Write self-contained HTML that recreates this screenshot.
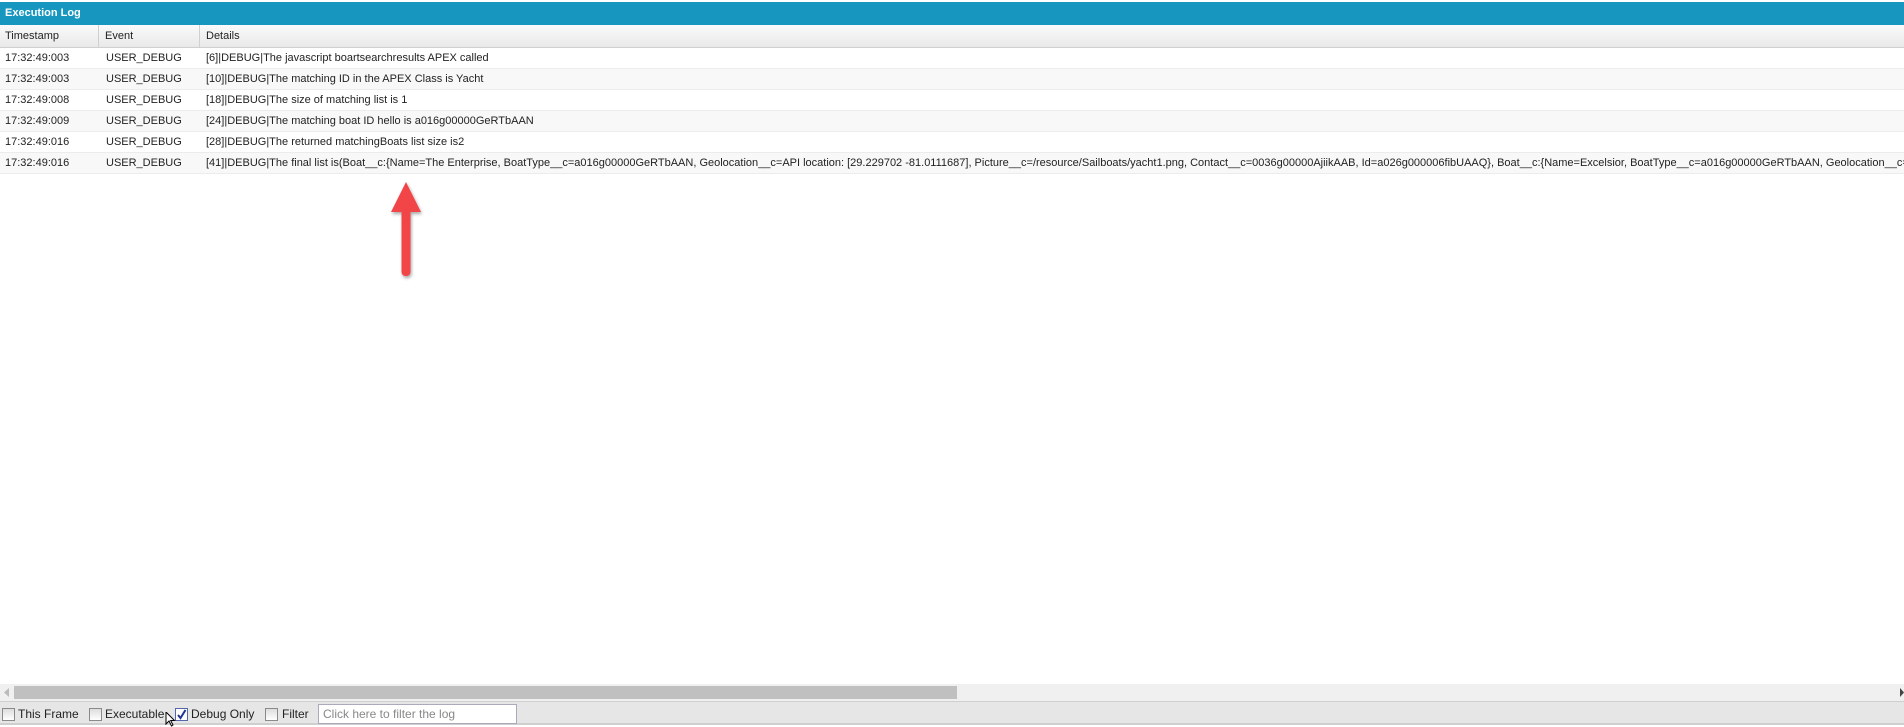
<!DOCTYPE html>
<html><head><style>
*{margin:0;padding:0;box-sizing:border-box}
body{width:1904px;height:727px;overflow:hidden;background:#fff;font-family:"Liberation Sans",Tahoma,sans-serif;font-size:11px;color:#222;position:relative}
.title{position:absolute;top:2px;left:0;width:1904px;height:23px;background:#1797c0;color:#fff;font-weight:bold;font-size:11px;line-height:23px;padding-left:5px}
.hdr{position:absolute;top:25px;left:0;width:1904px;height:23px;background:linear-gradient(#fafafa,#e9e9e9);border-bottom:1px solid #d0d0d0}
.hdr div,.row div{position:absolute;top:0;white-space:nowrap}
.hdr div{line-height:22px;height:22px;border-right:1px solid #d0d0d0}
.row{position:absolute;left:0;width:1904px;height:21px;border-bottom:1px solid #ececec;line-height:20px;overflow:hidden}
.row:nth-child(even){background:#f8f8f8}
.c1{left:5px}.c2{left:106px}.c3{left:206px}
.sb{position:absolute;top:684px;left:0;width:1904px;height:17px;background:#f0f0f0}
.thumb{position:absolute;top:686px;left:14px;width:943px;height:13px;background:#c0c0c0}
.tb{position:absolute;top:701px;left:0;width:1904px;height:24px;background:#e6e6e6;border-top:1px solid #cfcfcf;border-bottom:2px solid #cfcfcf}
.cb{position:absolute;top:708px;width:13px;height:13px;border:1px solid #8a8a8a;background:linear-gradient(#ddd,#fff)}
.lbl{position:absolute;top:707px;font-size:12px;color:#222}
.inp{position:absolute;top:704px;left:318px;width:199px;height:20px;border:1px solid #aab;background:#fff;color:#888;font-size:12px;line-height:18px;padding-left:4px}
</style></head><body>
<div class="title">Execution Log</div>
<div class="hdr"><div style="left:0;width:99px;padding-left:5px">Timestamp</div><div style="left:99px;width:101px;padding-left:6px">Event</div><div style="left:200px;padding-left:6px;border:none">Details</div></div>
<div style="position:absolute;top:48px;left:0">
<div class="row" style="top:0"><div class="c1">17:32:49:003</div><div class="c2">USER_DEBUG</div><div class="c3">[6]|DEBUG|The javascript boartsearchresults APEX called</div></div>
<div class="row" style="top:21px"><div class="c1">17:32:49:003</div><div class="c2">USER_DEBUG</div><div class="c3">[10]|DEBUG|The matching ID in the APEX Class is Yacht</div></div>
<div class="row" style="top:42px"><div class="c1">17:32:49:008</div><div class="c2">USER_DEBUG</div><div class="c3">[18]|DEBUG|The size of matching list is 1</div></div>
<div class="row" style="top:63px"><div class="c1">17:32:49:009</div><div class="c2">USER_DEBUG</div><div class="c3">[24]|DEBUG|The matching boat ID hello is a016g00000GeRTbAAN</div></div>
<div class="row" style="top:84px"><div class="c1">17:32:49:016</div><div class="c2">USER_DEBUG</div><div class="c3">[28]|DEBUG|The returned matchingBoats list size is2</div></div>
<div class="row" style="top:105px"><div class="c1">17:32:49:016</div><div class="c2">USER_DEBUG</div><div class="c3">[41]|DEBUG|The final list is(Boat__c:{Name=The Enterprise, BoatType__c=a016g00000GeRTbAAN, Geolocation__c=API location: [29.229702 -81.0111687], Picture__c=/resource/Sailboats/yacht1.png, Contact__c=0036g00000AjiikAAB, Id=a026g000006fibUAAQ}, Boat__c:{Name=Excelsior, BoatType__c=a016g00000GeRTbAAN, Geolocation__c=API location</div></div>
</div>
<svg style="position:absolute;left:388px;top:179px" width="40" height="102"><defs><filter id="s"><feDropShadow dx="1" dy="2" stdDeviation="1.5" flood-color="#000" flood-opacity=".35"/></filter></defs><g filter="url(#s)" fill="#f24447"><polygon points="18,3 33,33 3,33"/><rect x="13.5" y="30" width="9" height="67" rx="4"/></g></svg>
<div class="sb"></div><div class="thumb"></div>
<svg style="position:absolute;left:4px;top:688px" width="6" height="9"><polygon points="5,0 5,9 0,4.5" fill="#bbb"/></svg>
<svg style="position:absolute;left:1900px;top:688px" width="4" height="9"><polygon points="0,0 0,9 4,4.5" fill="#444"/></svg>
<div class="tb"></div>
<div class="cb" style="left:2px"></div><div class="lbl" style="left:18px">This Frame</div>
<div class="cb" style="left:89px"></div><div class="lbl" style="left:105px">Executable</div>
<div class="cb" style="left:175px;border-color:#5566aa;background:#fff"><svg width="11" height="11" style="position:absolute;left:0;top:0"><path d="M2 6 L4.5 9 L9.5 1" stroke="#223399" stroke-width="2" fill="none"/></svg></div><div class="lbl" style="left:191px">Debug Only</div>
<div class="cb" style="left:265px"></div><div class="lbl" style="left:282px">Filter</div>
<div class="inp">Click here to filter the log</div>
<svg style="position:absolute;left:165px;top:712px" width="12" height="15"><path d="M1 0 L1 12 L4 9 L6.5 14 L8 13 L5.7 8.5 L9.5 8.5 Z" fill="#fff" stroke="#000" stroke-width="1"/></svg>
</body></html>
